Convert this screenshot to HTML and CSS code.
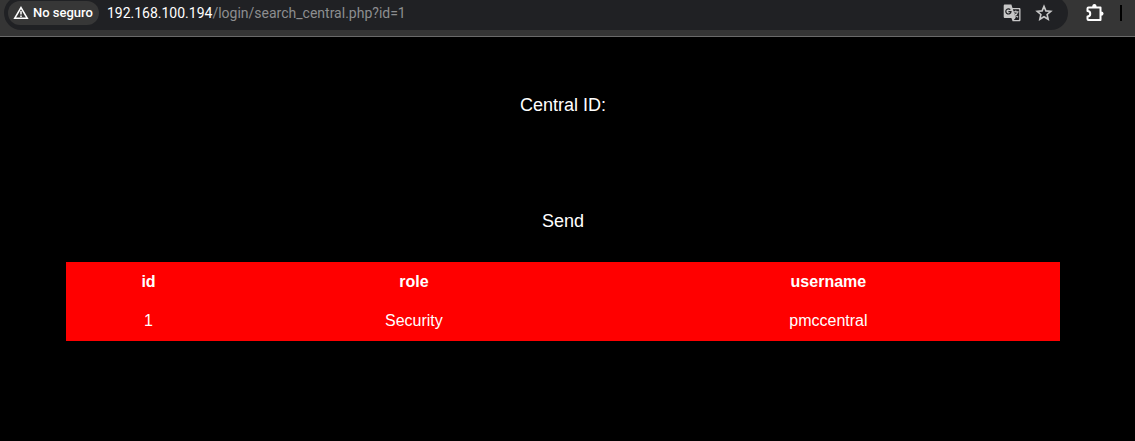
FILE: index.html
```html
<!DOCTYPE html>
<html lang="es">
<head>
<meta charset="utf-8">
<title>Central</title>
<link rel="stylesheet" href="styles.css">
</head>
<body>
<header class="toolbar">
  <div class="omnibox">
    <button class="chip" type="button">
      <svg class="chip-icon" viewBox="0 0 16 16" aria-hidden="true"><path d="M8 2.6 14.2 13.2H1.8Z" fill="none" stroke="currentColor" stroke-width="1.6"/><path d="M8 6v3.6M8 10.6v1.5" stroke="currentColor" stroke-width="1.5"/></svg>
      No seguro
    </button>
    <div class="url" role="textbox" aria-label="URL" contenteditable="true" spellcheck="false"><span class="host">192.168.100.194</span>/login/search_central.php?id=1</div>
    <button class="icon-button" type="button" aria-label="Traducir">
      <svg class="icon" viewBox="0 0 18 18" aria-hidden="true">
        <path d="M2 .6h6.400l1.100 3.400h6.700c.8 0 1.300.5 1.300 1.300v10.600c0 .8-.5 1.300-1.300 1.300H9.600L8.400 14H2C1.200 14 .7 13.500.7 12.700V1.900C.7 1.100 1.200.6 2 .6Z" fill="currentColor"/>
        <path d="M9.900 5.200h5.600c.4 0 .7.200.7.600v9.500c0 .4-.3.700-.7.700h-4.700l1.900-2.200Z" fill="#202124"/>
        <path d="M7.300 5.600A2.600 2.600 0 1 0 8 7.600H5.400" fill="none" stroke="#202124" stroke-width="1.200"/>
        <path d="M10.300 7.900h5.300M12.800 6.500v1.400M14.500 8c-.4 2.200-1.800 3.800-3.400 4.900M11.500 9.200c.6 1.600 1.900 3 3.600 4.100" fill="none" stroke="currentColor" stroke-width="1.100"/>
      </svg>
    </button>
    <button class="icon-button" type="button" aria-label="Favorito">
      <svg class="icon" viewBox="0 0 18 18" aria-hidden="true"><path d="m9 2.400 1.900 4.500 4.900.4-3.700 3.200 1.100 4.800L9 12.800l-4.200 2.500 1.100-4.800-3.700-3.200 4.900-.4Z" fill="none" stroke="currentColor" stroke-width="1.600"/></svg>
    </button>
  </div>
  <button class="extensions" type="button" aria-label="Extensiones">
    <svg class="icon-large" viewBox="0 0 20 20" aria-hidden="true"><path d="M3.500 4.500H15.500V17H3.500Q2.500 17 2.500 16V13.500a2.600 2.600 0 0 0 0-5.500V5.500q0-1 1-1Z" fill="none" stroke="currentColor" stroke-width="2" stroke-linejoin="round"/><path d="M7.200 4a2.200 3 0 0 1 4.400 0ZM16 8.400a2.600 2.200 0 0 1 0 4.400Z" fill="currentColor"/></svg>
  </button>
  <span class="divider"></span>
</header>
<main class="page">
  <form class="search">
    <label class="search-label" for="central">Central ID:</label>
    <input class="search-input" id="central" name="id" type="text">
    <button class="send" type="submit">Send</button>
  </form>
  <table class="results">
    <thead><tr><th class="col-id">id</th><th class="col-role">role</th><th class="col-user">username</th></tr></thead>
    <tbody><tr><td>1</td><td>Security</td><td>pmccentral</td></tr></tbody>
  </table>
</main>
</body>
</html>
```
FILE: styles.css
```css
* { box-sizing: border-box; }

body {
  margin: 0;
  background: #000;
  color: #fff;
  font-family: "Liberation Sans", Arial, sans-serif;
  font-size: 16px;
}

button {
  border: 0;
  padding: 0;
  background: none;
  color: inherit;
}

.toolbar {
  display: flex;
  align-items: flex-end;
  overflow: hidden;
  height: 37px;
  padding: 0 13px 6px 4px;
  border-bottom: 1px solid #6a6a6a;
  background: #353535;
  font-family: Roboto, sans-serif;
}

.omnibox {
  display: flex;
  flex: 1;
  align-items: center;
  height: 34px;
  padding: 0 15px 0 4px;
  border-radius: 17px;
  background: #202124;
}

.chip {
  display: flex;
  align-items: center;
  gap: 4px;
  height: 24px;
  padding: 0 6px 0 5px;
  border-radius: 12px;
  background: #373737;
  font: 500 13px/24px Roboto, sans-serif;
}

.chip-icon { width: 16px; height: 16px; }

.url {
  flex: 1;
  margin-left: 8px;
  color: #8d8e90;
  font-size: 14px;
  line-height: 20px;
  white-space: nowrap;
}

.host { color: #fff; }

.icon-button {
  display: flex;
  margin-left: 14px;
  padding: 0;
  color: #c7c7c7;
}

.icon { width: 18px; height: 18px; }

.extensions {
  display: flex;
  height: 34px;
  align-items: center;
  margin-left: 17px;
}

.icon-large { width: 20px; height: 20px; }

.divider {
  width: 2px;
  height: 16px;
  margin: 0 0 9px 15px;
  background: #000;
}

.page {
  padding: 48px 75px 100px 66px;
}

.search {
  display: flex;
  flex-direction: column;
  align-items: center;
  font-size: 18px;
  line-height: 40px;
}

.search-input {
  width: 200px;
  height: 40px;
  margin: 18px 0;
  border: 0;
  background: #000;
  color: #fff;
  font: inherit;
}

.send {
  padding: 0 20px;
  font: inherit;
}

.results {
  width: 100%;
  margin-top: 21px;
  border-collapse: collapse;
  table-layout: fixed;
  background: #f00;
  text-align: center;
  line-height: 19px;
}

.results th, .results td { padding: 10px; }
.results td { padding-bottom: 11px; }
.col-id { width: 16.6%; }
.col-role { width: 36.8%; }
.col-user { width: 46.6%; }
```
